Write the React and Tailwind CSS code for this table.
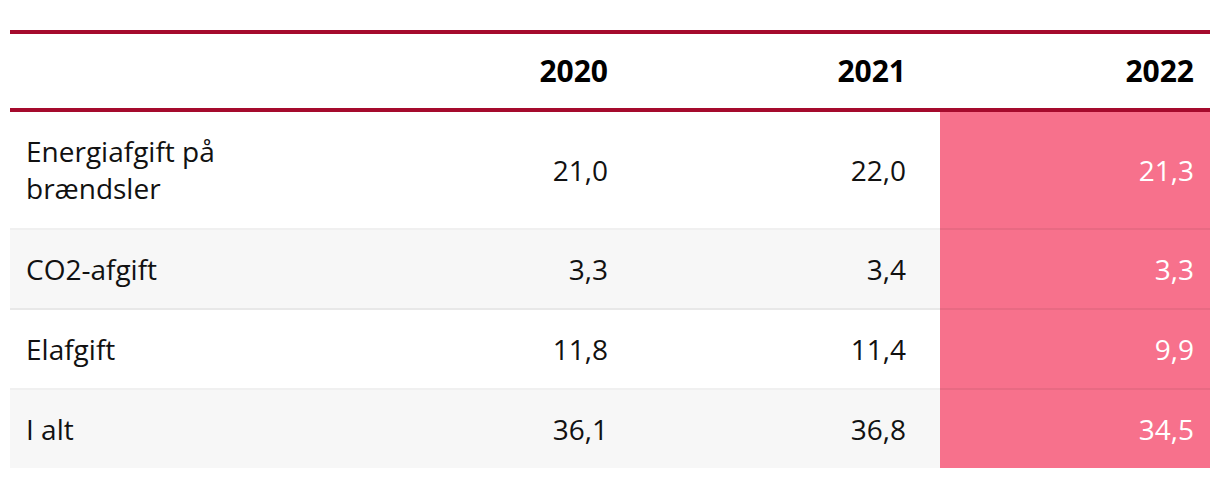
import React from "react";

const rows = [
  { label: "Energiafgift på brændsler", v: ["21,0", "22,0", "21,3"] },
  { label: "CO2-afgift", v: ["3,3", "3,4", "3,3"] },
  { label: "Elafgift", v: ["11,8", "11,4", "9,9"] },
  { label: "I alt", v: ["36,1", "36,8", "34,5"] },
];

export default function App() {
  return (
    <div
      className="w-[1220px] h-[478px] bg-white pt-[30px] px-[10px]"
      style={{ fontFamily: '"Open Sans", sans-serif' }}
    >
      <div className="w-[1200px] border-t-4 border-[#a50a2d]">
        <div className="grid grid-cols-[230px_384px_316px_270px] border-b-4 border-[#a50a2d] text-[30px] leading-[36px] font-bold text-black">
          <div className="py-[19px] pl-4"></div>
          <div className="py-[19px] pr-4 text-right">2020</div>
          <div className="py-[19px] pr-[34px] text-right">2021</div>
          <div className="py-[19px] pr-4 text-right">2022</div>
        </div>
        {rows.map((r, i) => {
          const last = i === rows.length - 1;
          const bd = last ? "" : " border-b-2 border-black/[0.06]";
          return (
            <div
              key={r.label}
              className={
                "grid grid-cols-[230px_384px_316px_270px] text-[28px] text-[#111] " +
                (i % 2 === 1 ? "bg-[#f7f7f7]" : "bg-white")
              }
            >
              <div
                className={
                  "pl-4 " +
                  (i === 0 ? "py-[21px] leading-[37px]" : "py-[21px] leading-[36px]") +
                  bd
                }
              >
                {r.label}
              </div>
              <div className={"pr-4 flex items-center justify-end" + bd}>{r.v[0]}</div>
              <div className={"pr-[34px] flex items-center justify-end" + bd}>{r.v[1]}</div>
              <div className={"pr-4 flex items-center justify-end bg-[#f7718c] text-white" + bd}>
                {r.v[2]}
              </div>
            </div>
          );
        })}
      </div>
    </div>
  );
}
